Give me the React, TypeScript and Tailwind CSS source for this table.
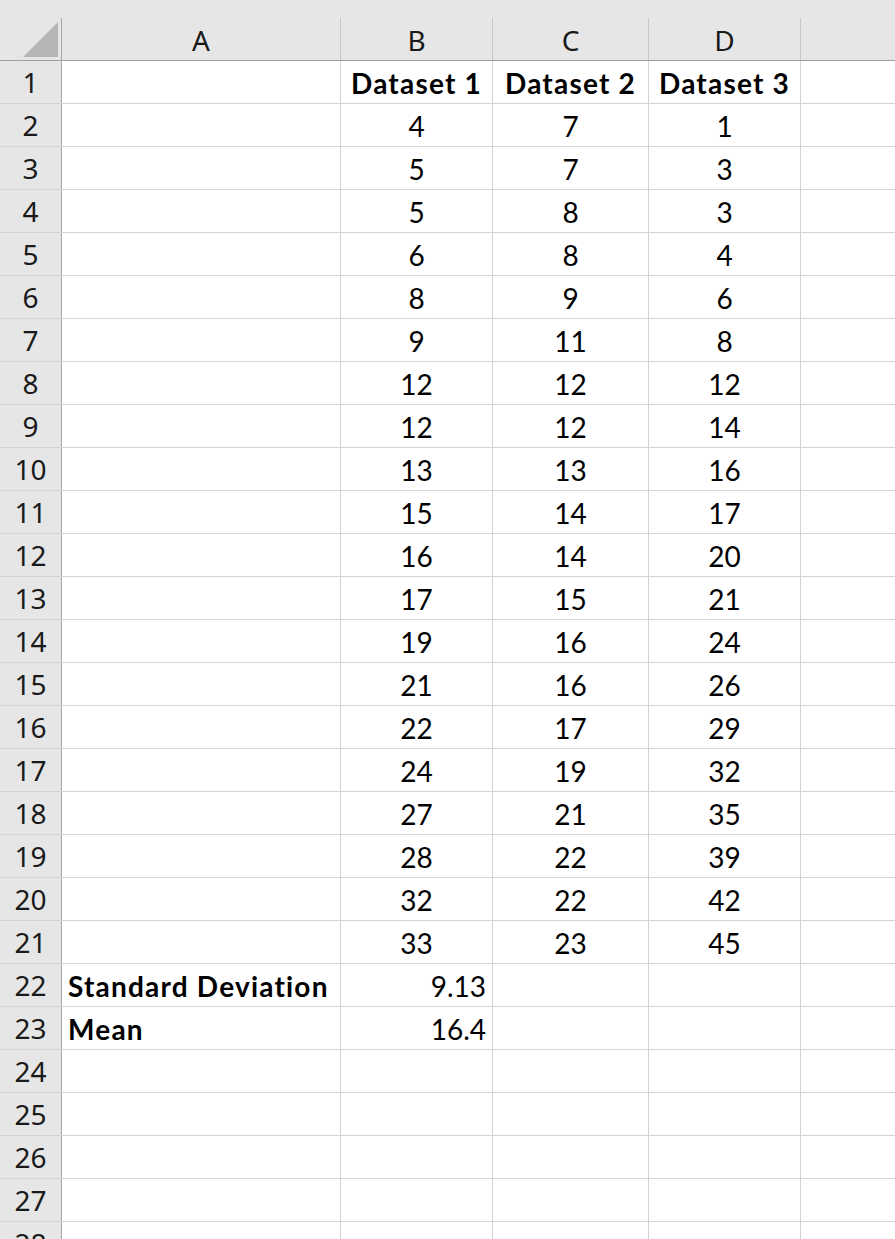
import React from "react";

const COLS = ["A", "B", "C", "D", ""];
const COL_W = ["w-[279px]", "w-[152px]", "w-[156px]", "w-[152px]", "flex-1"];

const B = [4, 5, 5, 6, 8, 9, 12, 12, 13, 15, 16, 17, 19, 21, 22, 24, 27, 28, 32, 33];
const C = [7, 7, 8, 8, 9, 11, 12, 12, 13, 14, 14, 15, 16, 16, 17, 19, 21, 22, 22, 23];
const D = [1, 3, 3, 4, 6, 8, 12, 14, 16, 17, 20, 21, 24, 26, 29, 32, 35, 39, 42, 45];

type Cell = { text?: string; bold?: boolean; align?: "left" | "center" | "right" };

function rowCells(r: number): Cell[] {
  if (r === 1) {
    return [
      {},
      { text: "Dataset 1", bold: true, align: "center" },
      { text: "Dataset 2", bold: true, align: "center" },
      { text: "Dataset 3", bold: true, align: "center" },
      {},
    ];
  }
  if (r >= 2 && r <= 21) {
    const i = r - 2;
    return [
      {},
      { text: String(B[i]), align: "center" },
      { text: String(C[i]), align: "center" },
      { text: String(D[i]), align: "center" },
      {},
    ];
  }
  if (r === 22) {
    return [{ text: "Standard Deviation", bold: true, align: "left" }, { text: "9.13", align: "right" }, {}, {}, {}];
  }
  if (r === 23) {
    return [{ text: "Mean", bold: true, align: "left" }, { text: "16.4", align: "right" }, {}, {}, {}];
  }
  return [{}, {}, {}, {}, {}];
}

const alignClass = {
  left: "justify-start pl-[6px]",
  center: "justify-center",
  right: "justify-end pr-[6px]",
};

const uiFont = { fontFamily: "'Noto Sans', 'Open Sans', sans-serif" };
const cellFont = { fontFamily: "Lato, 'Noto Sans', sans-serif" };

export default function App() {
  const rows = Array.from({ length: 28 }, (_, i) => i + 1);
  return (
    <div className="h-[1239px] w-[895px] overflow-hidden bg-white text-black">
      {/* column header strip */}
      <div className="flex flex-col border-b border-[#9e9e9e] bg-[#e6e6e6]">
        <div className="h-[18px]" />
        <div className="flex h-[42px]">
          <div className="relative w-[62px] shrink-0 border-r border-[#a8a8a8]">
            <svg className="absolute left-[23px] top-[4px]" width="35" height="35" viewBox="0 0 35 35">
              <polygon points="35,0 35,35 0,35" fill="#b5b5b5" />
            </svg>
          </div>
          {COLS.map((c, i) => (
            <div
              key={i}
              className={`${COL_W[i]} flex shrink-0 items-center justify-center pt-[2px] text-[28px] text-[#1a1a1a] ${
                i < 4 ? "border-r border-[#c8c8c8]" : ""
              }`}
              style={uiFont}
            >
              {c}
            </div>
          ))}
        </div>
      </div>

      {rows.map((r) => (
        <div key={r} className="flex h-[43px] border-b border-[#d4d4d4]">
          <div
            className="flex w-[62px] shrink-0 items-center justify-center border-r border-[#a8a8a8] bg-[#e6e6e6] text-[28px] text-[#1a1a1a]"
            style={uiFont}
          >
            {r}
          </div>
          {rowCells(r).map((cell, i) => (
            <div
              key={i}
              className={`${COL_W[i]} flex shrink-0 items-center pt-[2px] text-[28px] ${
                i < 4 ? "border-r border-[#d4d4d4]" : ""
              } ${alignClass[cell.align ?? "center"]} ${cell.bold ? "font-bold tracking-[1.2px]" : ""}`}
              style={cellFont}
            >
              {cell.text}
            </div>
          ))}
        </div>
      ))}
    </div>
  );
}
